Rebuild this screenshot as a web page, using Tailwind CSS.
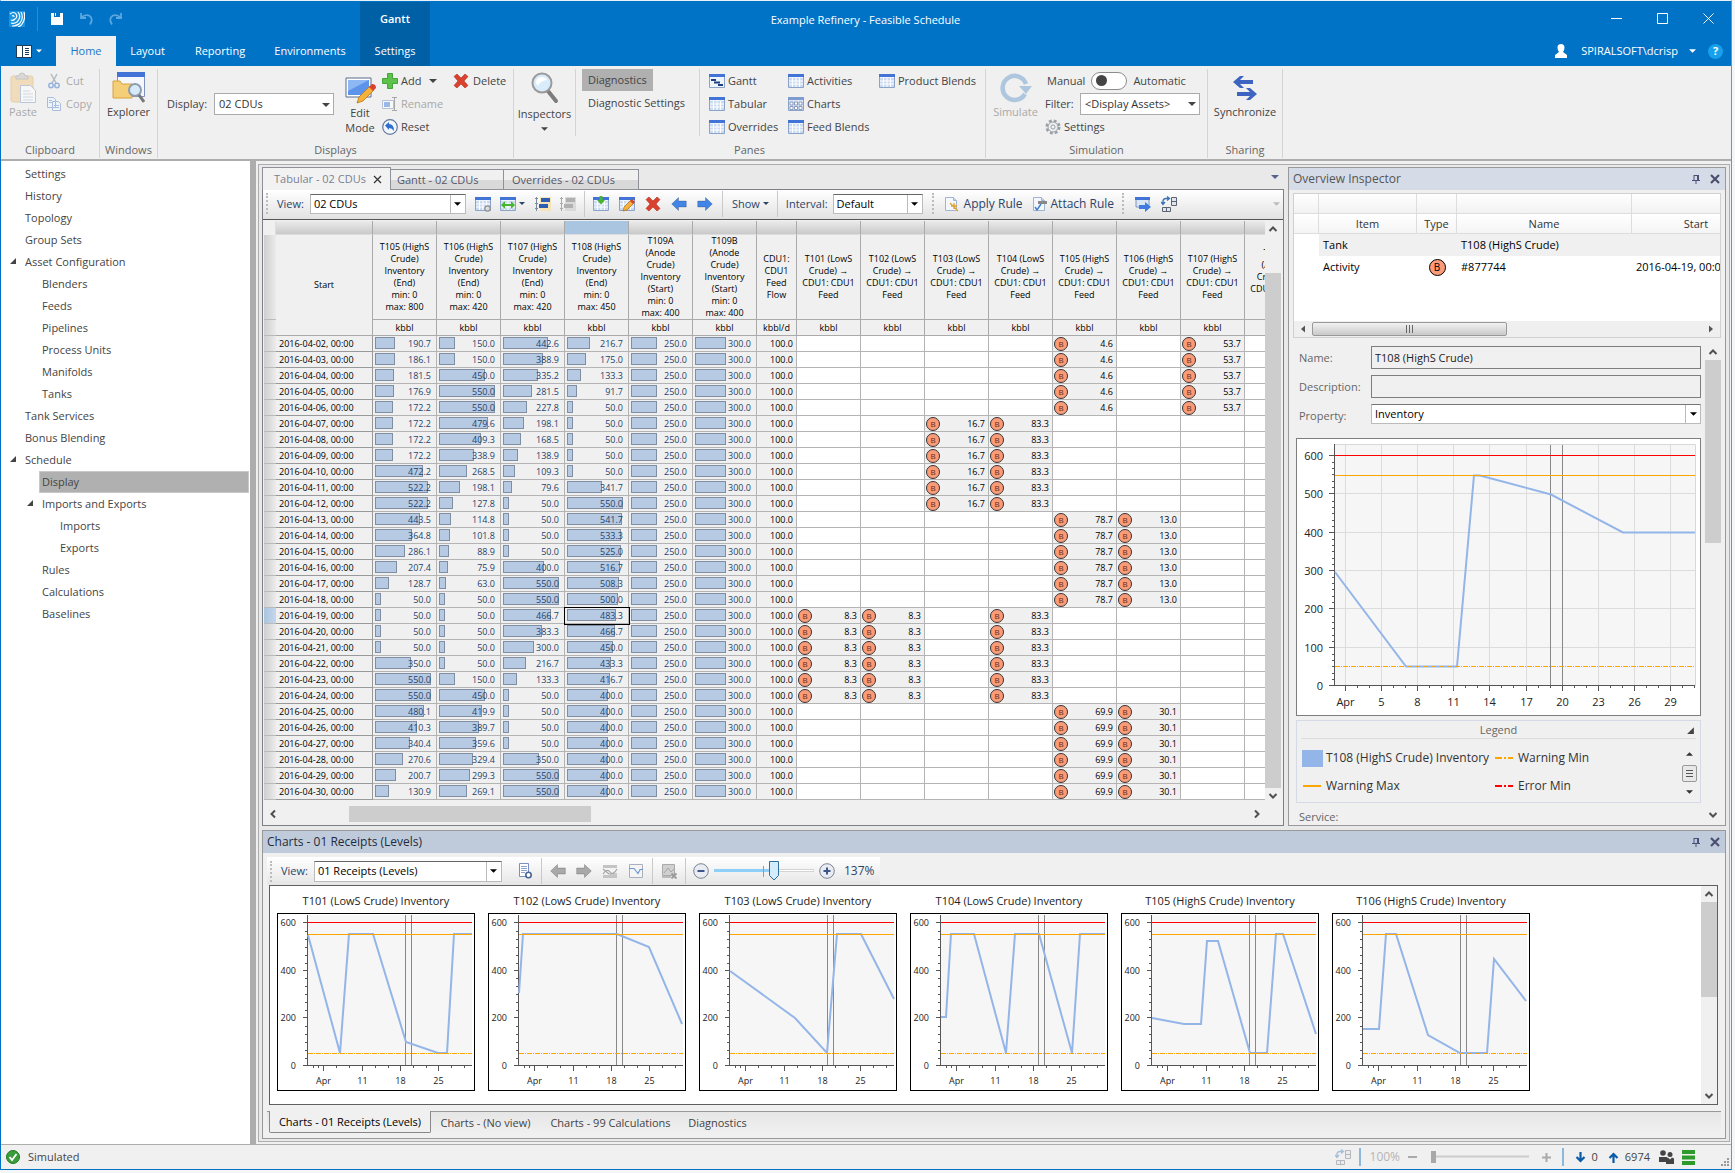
<!DOCTYPE html>
<html lang="en">

<head>
    <meta charset="UTF-8">
    <meta name="viewport" content="width=device-width, initial-scale=1.0">
    <title>Example Refinery - Feasible Schedule</title>
    <script src="https://cdn.jsdelivr.net/npm/@tailwindcss/browser@4"></script>
</head>

<body class="h-screen overflow-hidden bg-[#f4f6f8] font-['Segoe_UI','Open_Sans',sans-serif] text-[11px] leading-4 text-[#444]">

    <!-- shared icons -->
    <svg class="hidden">
        <symbol id="caret" viewBox="0 0 8 4"><path d="M0 0h8L4 4z" fill="currentColor" /></symbol>
        <symbol id="chev-up" viewBox="0 0 16 16"><path d="M4.500 10 8 6.500 11.500 10" fill="none" stroke="#505050" stroke-width="2" /></symbol>
        <symbol id="chev-down" viewBox="0 0 16 16"><path d="M4.500 6 8 9.500 11.500 6" fill="none" stroke="#505050" stroke-width="2" /></symbol>
        <symbol id="chev-left" viewBox="0 0 16 16"><path d="M10 4.500 6.500 8 10 11.500" fill="none" stroke="#505050" stroke-width="2" /></symbol>
        <symbol id="chev-right" viewBox="0 0 16 16"><path d="M6 4.500 9.500 8 6 11.500" fill="none" stroke="#505050" stroke-width="2" /></symbol>
        <symbol id="tri" viewBox="0 0 8 8"><path d="M7 1v6H1z" fill="#444" /></symbol>
        <symbol id="grid" viewBox="0 0 16 16">
            <path d="M.5 1.500h15v13H.5z" fill="#eef4fc" stroke="#8ba3c9" />
            <path d="M1 5h14v9H1z" fill="#c9daf1" />
            <path d="M1 8h14M1 11h14M4.500 5v9M8 5v9M11.500 5v9" stroke="#fff" />
            <path d="M0 1h16v3H0z" fill="#4274d8" />
        </symbol>
        <symbol id="left" viewBox="0 0 16 16"><path d="M.7 8 7.500 1.500V5h7.800v6H7.500v3.500z" fill="currentColor" stroke="#0003" /></symbol>
        <symbol id="right" viewBox="0 0 16 16"><path d="M15.300 8 8.500 1.500V5H.7v6h7.800v3.500z" fill="currentColor" stroke="#0003" /></symbol>
        <symbol id="cross" viewBox="0 0 16 16"><path d="M1 3.500 4 1l4 4 4-4 3 2.500L11 8l4 4.500L12 15l-4-4-4 4-3-2.500L5 8z" fill="#d9422e" stroke="#b13221" stroke-width=".6" /></symbol>
        <symbol id="pin" viewBox="0 0 10 10"><path d="M3 1v5M7.500 1v5M3 1.500h4M6.500 1v5M1 6.500h8M5 7v3" fill="none" stroke="#4a5078" /></symbol>
        <symbol id="close" viewBox="0 0 10 10"><path d="m1 1 8 8M9 1 1 9" stroke="#4a4f70" stroke-width="2.200" /></symbol>
        <symbol id="swap" viewBox="0 0 16 16">
            <path d="M2 8V5q0-2.500 3-2.500h3M6 .5l2.500 2L6 4.500M0 6l2 2.500L4 6" fill="none" stroke="#3b74b9" stroke-width="1.300" />
            <path d="M10.500 1.500h5v8h-5zM10.500 5.500h5M1.500 11.500h8v4h-8zM5.500 11.500v4" fill="#dfe5ec" stroke="#5b6470" />
        </symbol>
        <symbol id="page" viewBox="0 0 16 16">
            <path d="M2.500 1.500h8l3 3v10h-11z" fill="#f4f8fe" stroke="#9fb4d3" />
            <path d="M10.500 1.500v3h3" fill="#c8d9f0" stroke="#9fb4d3" />
        </symbol>
    </svg>

    <div class="mr-[3px] flex h-[calc(100%-3px)] flex-col border-t border-r border-b border-l border-t-[#e8f1f8] border-r-[#4f9fdb] border-b-[#0072c6] border-l-[#0072c6] bg-[#f0f0f0]">

        <!-- title bar -->
        <header class="flex h-[65px] shrink-0 bg-[#0173c7] text-white">
            <div class="flex w-[359px] flex-col">
                <div class="flex h-[35px] items-center pl-2">
                    <svg class="size-4" viewBox="0 0 16 16">
                        <path d="M0 0h16v16H0z" fill="#1a93e0" />
                        <path d="M1 3q4-3 6 0t-1 5q-2 2-4 1M3 5q2-1 2 1M9 1q4 5-1 10-3 2-6 1M12 1q3 6-1 11-3 3-8 3M15 1q2 7-2 12-1 2-4 3" fill="none" stroke="#fff" stroke-width="1.200" />
                    </svg>
                    <span class="ml-3 h-6 w-px bg-[#2f8cd2]"></span>
                    <button class="ml-3" aria-label="Save">
                        <svg class="size-[14px]" viewBox="0 0 14 14"><path d="M1 1h3v4h6V1h3v12H1zM5 1h1v3H5z" fill="#fff" /></svg>
                    </button>
                    <button class="ml-4" aria-label="Undo">
                        <svg class="size-[14px]" viewBox="0 0 14 14" fill="none" stroke="#5ba6df" stroke-width="1.800"><path d="M1 1v5h5M1.500 5.500Q5 2 9 3.500q5 3 1 9" /></svg>
                    </button>
                    <button class="ml-[14px]" aria-label="Redo">
                        <svg class="size-[14px]" viewBox="0 0 14 14" fill="none" stroke="#5ba6df" stroke-width="1.800"><path d="M13 1v5H8M12.500 5.500Q9 2 5 3.500q-5 3-1 9" /></svg>
                    </button>
                </div>
                <nav class="flex h-[30px]">
                    <button class="flex w-[55px] items-center gap-1 pl-[15px]" aria-label="File">
                        <svg class="h-[13px] w-4" viewBox="0 0 16 13">
                            <path d="M0 0h16v13H0z" fill="#1d3c57" />
                            <path d="M1 1h5v11H1zM7 1h8v11H7z" fill="#fff" />
                            <path d="M9 3.500h4M9 5.500h4M9 7.500h4M9 9.500h4" stroke="#1d3c57" />
                        </svg>
                        <svg class="h-1 w-[6px]"><use href="#caret" /></svg>
                    </button>
                    <button class="w-[60px] bg-[#f0f0f0] text-[#1976c8]">Home</button>
                    <button class="w-[63px]">Layout</button>
                    <button class="w-[82px]">Reporting</button>
                    <button class="w-[98px]">Environments</button>
                </nav>
            </div>
            <div class="mt-px flex w-[70px] flex-col bg-[#0060a6]">
                <span class="flex h-[34px] items-center justify-center font-semibold">Gantt</span>
                <button class="h-[30px]">Settings</button>
            </div>
            <h1 class="flex h-[37px] flex-1 items-center justify-center">Example Refinery - Feasible Schedule</h1>
            <div class="flex w-[430px] flex-col pr-2">
                <div class="flex h-[35px] items-center justify-end gap-[35px] pr-[9px]">
                    <button aria-label="Minimize"><svg class="size-[11px]"><path d="M0 5.500h11" stroke="#fff" /></svg></button>
                    <button aria-label="Maximize"><svg class="size-[11px]"><path d="M.5.5h10v10H.5z" fill="none" stroke="#fff" /></svg></button>
                    <button aria-label="Close"><svg class="size-[11px]"><path d="m.5.5 10 10m0-10-10 10" stroke="#fff" /></svg></button>
                </div>
                <div class="flex h-[30px] items-center justify-end">
                    <svg class="mr-[14px] h-[14px] w-3" viewBox="0 0 12 14"><path d="M6 0a3.500 3.500 0 0 1 3.500 3.500Q9.500 6 8 8l4 3v3H0v-3l4-3Q2.500 6 2.500 3.500A3.500 3.500 0 0 1 6 0z" fill="#fff" /></svg>
                    <button class="flex items-center gap-[11px]">SPIRALSOFT\dcrisp <svg class="h-1 w-[7px]"><use href="#caret" /></svg></button>
                    <button class="ml-[12px] flex size-[15px] items-center justify-center rounded-full bg-[#17a0ec] text-[11px] font-bold">?</button>
                </div>
            </div>
        </header>

        <!-- ribbon -->
        <section class="flex h-[95px] shrink-0 border-b-2 border-[#adadad] pt-[3px] pb-px">
            <div class="flex w-[99px] flex-col border-r border-[#d4d4d4]">
                <div class="flex flex-1 pl-[8px] text-[#a9a9a9]">
                    <button class="flex w-7 flex-col items-center">
                        <svg class="mt-[3px] h-8 w-7 shrink-0 opacity-50" viewBox="0 0 28 32">
                            <rect x="2" y="4" width="22" height="26" rx="2" fill="#f0c987" stroke="#dbb06a" />
                            <path d="M7 7V4h3q0-3 3-3t3 3h3v3z" fill="#c4c4c4" stroke="#999" />
                            <path d="M11.500 13.500h10l5 5v12h-15z" fill="#fff" stroke="#8aa0c0" />
                            <path d="M14 19h7m-7 3h10m-10 3h10m-10 3h10" stroke="#b4c2d8" />
                        </svg>
                        Paste
                    </button>
                    <div class="flex flex-col pl-[9px]">
                        <button class="flex h-[23px] items-center gap-1">
                            <svg class="size-4 opacity-60" viewBox="0 0 16 16" fill="none"><path d="m5 1 5 9M11 1l-5 9" stroke="#8a96a8" stroke-width="1.500" /><circle cx="5" cy="12.500" r="2.200" stroke="#5c8ad0" stroke-width="1.500" /><circle cx="11" cy="12.500" r="2.200" stroke="#5c8ad0" stroke-width="1.500" /></svg>
                            Cut
                        </button>
                        <button class="flex h-[23px] items-center gap-1">
                            <svg class="size-4 opacity-60" viewBox="0 0 16 16" fill="#eef4ff" stroke="#7b9ccf"><path d="M1.500 1.500h6l2 2v8h-8zM6.500 5.500h6l2 2v7h-8z" /><path d="M8 9.500h5M8 11.500h5M3 4.500h3M3 6.500h3" /></svg>
                            Copy
                        </button>
                    </div>
                </div>
                <span class="text-center text-[#666]">Clipboard</span>
            </div>
            <div class="flex w-[58px] flex-col border-r border-[#d4d4d4]">
                <button class="flex flex-1 flex-col items-center">
                    <svg class="mt-[3px] h-8 w-[33px]" viewBox="0 0 33 32">
                        <path d="M5.500.5h27v24h-27z" fill="#f4f8fe" stroke="#7c94bd" />
                        <path d="M5 0h28v5H5z" fill="#4274d8" />
                        <path d="M1 9h7l2 3h10v14H1z" fill="#f5cf78" stroke="#d8a23c" />
                        <circle cx="23" cy="18" r="6" fill="#d6eafa" stroke="#8e9bab" stroke-width="2" />
                        <path d="m27 23 5 7" stroke="#777" stroke-width="3" />
                    </svg>
                    Explorer
                </button>
                <span class="text-center text-[#666]">Windows</span>
            </div>
            <div class="flex w-[356px] flex-col border-r border-[#d4d4d4]">
                <div class="flex flex-1">
                    <div class="flex h-[69px] items-center pl-[9px]">
                        <label for="display">Display:</label>
                        <div class="relative ml-[7px]">
                            <select id="display" class="block h-[22px] w-[120px] appearance-none border border-[#ababab] bg-white pl-1 text-[#333]"><option>02 CDUs</option></select>
                            <svg class="pointer-events-none absolute top-[10px] right-1 h-1 w-2"><use href="#caret" /></svg>
                        </div>
                    </div>
                    <button class="ml-[8px] flex w-[36px] flex-col items-center leading-[15px]">
                        <svg class="mt-2 mb-px h-[27px] w-[31px] shrink-0" viewBox="0 0 31 27">
                            <path d="M1 1h25v19H1z" fill="#fff" stroke="#5a6b8c" />
                            <path d="M3 3h21v15H3z" fill="#5b94e8" />
                            <path d="M3 3h21L3 14z" fill="#8db8f4" />
                            <path d="m12 26 2-6L25 9l4 4-11 11z" fill="#f4b13c" stroke="#b87912" stroke-width=".8" />
                            <path d="m24 10 3-3q4 0 4 4l-3 3z" fill="#d9422e" />
                        </svg>
                        Edit Mode
                    </button>
                    <div class="ml-1 flex w-[71px] flex-col">
                        <button class="flex h-[23px] items-center gap-[3px]">
                            <svg class="size-4" viewBox="0 0 16 16"><path d="M5.500.5h5v5h5v5h-5v5h-5v-5h-5v-5h5z" fill="#5cc24b" stroke="#46a538" /></svg>
                            Add <svg class="ml-[5px] h-1 w-2"><use href="#caret" /></svg>
                        </button>
                        <button class="flex h-[23px] items-center gap-[3px] text-[#a9a9a9]">
                            <svg class="size-4 opacity-60" viewBox="0 0 16 16"><path d="M.5 4.500h11v8H.5z" fill="#fff" stroke="#8fa5c4" /><path d="M2 6h6v5H2z" fill="#5b94e8" /><path d="M10 1.500h5M10 14.500h5M12.500 2v12" stroke="#777" /></svg>
                            Rename
                        </button>
                        <button class="flex h-[23px] items-center gap-[3px]">
                            <svg class="size-4" viewBox="0 0 16 16"><circle cx="8" cy="8" r="7.300" fill="#f2f7fd" stroke="#63779a" stroke-width="1.200" /><path d="M3 6.500 7 3v2q5 0 5 7-2-3-5-3v2z" fill="#2f6fd0" /></svg>
                            Reset
                        </button>
                    </div>
                    <button class="flex h-[23px] items-center gap-1"><svg class="size-4"><use href="#cross" /></svg>Delete</button>
                </div>
                <span class="text-center text-[#666]">Displays</span>
            </div>
            <div class="flex w-[472px] flex-col border-r border-[#d4d4d4]">
                <div class="flex flex-1">
                    <button class="flex h-[67px] w-[62px] flex-col items-center border-r border-[#d4d4d4]">
                        <svg class="mt-[3px] mb-[2px] h-8 w-7 shrink-0" viewBox="0 0 28 32">
                            <path d="m17 19 8 10" stroke="#7c7c7c" stroke-width="4" stroke-linecap="round" />
                            <circle cx="11" cy="11" r="9.500" fill="#d9ecfb" stroke="#9a9a9a" stroke-width="2" />
                            <path d="M5 11q0-6 6-6 4 0 5 3-7 1-9 6z" fill="#fff" />
                        </svg>
                        Inspectors
                        <svg class="mt-[5px] h-1 w-[7px]"><use href="#caret" /></svg>
                    </button>
                    <div class="flex h-[67px] w-[124px] flex-col items-start border-r border-[#d4d4d4] pl-[6px]">
                        <button class="h-[22px] bg-[#b0b0b0] px-[6px]">Diagnostics</button>
                        <button class="h-[24px] px-[6px]">Diagnostic Settings</button>
                    </div>
                    <div class="grid h-[69px] grid-flow-col grid-cols-[79px_91px_auto] grid-rows-3 pl-[9px]">
                        <button class="flex items-center gap-[3px]">
                            <svg class="size-4" viewBox="0 0 16 16"><path d="M.5 1.500h15v13H.5z" fill="#eef4fc" stroke="#8ba3c9" /><path d="M0 1h16v3H0z" fill="#4274d8" /><path d="M2 7h5M5 9.500h6M9 12h5" stroke="#1f3f80" stroke-width="2" /></svg>
                            Gantt
                        </button>
                        <button class="flex items-center gap-[3px]"><svg class="size-4"><use href="#grid" /></svg>Tabular</button>
                        <button class="flex items-center gap-[3px]"><svg class="size-4"><use href="#grid" /></svg>Overrides</button>
                        <button class="flex items-center gap-[3px]"><svg class="size-4"><use href="#grid" /></svg>Activities</button>
                        <button class="flex items-center gap-[3px]">
                            <svg class="size-4" viewBox="0 0 16 16"><path d="M.5 1.500h15v13H.5z" fill="#dce6f5" stroke="#8ba3c9" /><path d="M0 1h16v3H0z" fill="#7e9bd0" /><path d="M2 6h3v3H2zM6.500 6h3v3h-3zM11 6h3v3h-3zM2 10.500h3v3H2zM6.500 10.500h3v3h-3zM11 10.500h3v3h-3z" fill="#fff" stroke="#7287b0" stroke-width=".8" /></svg>
                            Charts
                        </button>
                        <button class="flex items-center gap-[3px]"><svg class="size-4"><use href="#grid" /></svg>Feed Blends</button>
                        <button class="flex items-center gap-[3px]"><svg class="size-4"><use href="#grid" /></svg>Product Blends</button>
                    </div>
                </div>
                <span class="text-center text-[#666]">Panes</span>
            </div>
            <div class="flex w-[222px] flex-col border-r border-[#d4d4d4]">
                <div class="flex flex-1">
                    <button class="flex w-[59px] flex-col items-center text-[#a9a9a9]">
                        <svg class="mt-[3px] h-8 w-[32px]" viewBox="0 0 32 32">
                            <path d="M25 22A12 12 0 1 1 26 12" fill="none" stroke="#aec7de" stroke-width="4.500" />
                            <path d="M19 14h13l-6 8z" fill="#aec7de" />
                        </svg>
                        Simulate
                    </button>
                    <div class="flex flex-col">
                        <label class="flex h-[23px] items-center pl-[2px]">Manual
                            <input type="checkbox" role="switch" class="peer sr-only">
                            <span class="mx-[6px] flex h-[18px] w-9 items-center rounded-full border border-[#8d8d8d] bg-white pl-[4px]"><span class="size-[11px] rounded-full bg-[#444]"></span></span>
                            Automatic
                        </label>
                        <div class="flex h-[23px] items-center">
                            <label for="filter" class="w-[35px]">Filter:</label>
                            <div class="relative">
                                <select id="filter" class="block h-[22px] w-[120px] appearance-none border border-[#ababab] bg-white pl-1 text-[#333]"><option>&lt;Display Assets&gt;</option></select>
                                <svg class="pointer-events-none absolute top-[9px] right-1 h-1 w-2"><use href="#caret" /></svg>
                            </div>
                        </div>
                        <button class="flex h-[23px] items-center gap-[3px]">
                            <svg class="size-4" viewBox="0 0 16 16"><circle cx="8" cy="8" r="6.300" fill="none" stroke="#9aa0a6" stroke-width="2.500" stroke-dasharray="2.900 2.050" /><circle cx="8" cy="8" r="5" fill="#eceff2" stroke="#9aa0a6" /><circle cx="8" cy="8" r="2" fill="#f7f7f7" stroke="#9aa0a6" /></svg>
                            Settings
                        </button>
                    </div>
                </div>
                <span class="text-center text-[#666]">Simulation</span>
            </div>
            <div class="flex w-[75px] flex-col border-r border-[#d4d4d4]">
                <button class="flex flex-1 flex-col items-center">
                    <svg class="mt-[7px] mb-1 h-6 w-6" viewBox="0 0 24 24" fill="#3d64c0"><path d="m0 6 7-6h4L7 4h13v4H7l4 4H7zM24 18l-7 6h-4l4-4H4v-4h13l-4-4h4z" /></svg>
                    Synchronize
                </button>
                <span class="text-center text-[#666]">Sharing</span>
            </div>
        </section>

        <main class="flex min-h-0 flex-1">
            <!-- explorer tree -->
            <aside class="w-[249px] shrink-0 bg-white pt-[2px] pl-px">
                <ul id="tree"></ul>
            </aside>
            <div class="w-[6px] shrink-0 bg-[#adadad]"></div>

            <div class="mt-[3px] mr-px mb-[2px] ml-[2px] flex min-w-0 flex-1 flex-col gap-1 border border-[#adadad] bg-[#e9e9e9] pt-[2px] pr-[3px] pb-[2px] pl-[3px]">
                <div class="flex min-h-0 flex-1 gap-1">
                    <!-- tabular pane -->
                    <section class="flex min-w-0 flex-1 flex-col">
                        <div class="relative z-10 -mb-px flex h-[23px] shrink-0 items-end">
                            <button class="flex h-[23px] w-[129px] items-center justify-between border border-b-0 border-[#8f9199] bg-[#f2f2f2] pr-2 pl-[11px] text-[#7b7f92]">Tabular - 02 CDUs
                                <svg class="size-[9px]" viewBox="0 0 9 9"><path d="m1 1 7 7m0-7L1 8" stroke="#333" stroke-width="1.200" /></svg>
                            </button>
                            <button class="h-[21px] w-[113px] border border-l-0 border-[#8f9199] bg-linear-to-b from-[#f0f0f0] from-50% to-[#d9d9d9] to-50% pl-[6px] text-left text-[#54576a]">Gantt - 02 CDUs</button>
                            <button class="h-[21px] w-[135px] border border-l-0 border-[#8f9199] bg-linear-to-b from-[#f0f0f0] from-50% to-[#d9d9d9] to-50% pl-[8px] text-left text-[#54576a]">Overrides - 02 CDUs</button>
                            <button class="mr-[5px] mb-[11px] ml-auto text-[#5a6290]" aria-label="Tab list"><svg class="h-1 w-2"><use href="#caret" /></svg></button>
                        </div>
                        <div class="flex min-h-0 flex-1 flex-col border border-[#7d7f86] bg-[#f0f0f0] pb-[3px]">
                            <div class="flex h-[30px] shrink-0 items-center border-b border-[#555] bg-linear-to-b from-white to-[#e2e2e2] pb-[2px] pl-[3px] text-[#2d4468]">
                                <span class="mr-[9px] h-[21px] border-l-2 border-dotted border-[#bbb]"></span>
                                <label for="view">View:</label>
                                <div class="relative ml-[6px]">
                                    <select id="view" class="block h-5 w-[156px] appearance-none border border-[#bbb] border-t-[#666] bg-white pl-[3px] text-black"><option>02 CDUs</option></select>
                                    <span class="pointer-events-none absolute top-px right-px flex h-[18px] w-[15px] items-center justify-center border-l border-[#bbb] text-black"><svg class="h-1 w-[7px]"><use href="#caret" /></svg></span>
                                </div>
                                <div class="ml-[9px] flex items-center gap-[9px]">
                                    <button aria-label="View settings"><svg class="size-4" viewBox="0 0 16 16"><use href="#grid" /><circle cx="12.500" cy="12.500" r="2.700" fill="#ddd" stroke="#8a8f96" stroke-width="1.200" /></svg></button>
                                    <button class="flex items-center gap-[3px]" aria-label="Column width"><svg class="size-4" viewBox="0 0 16 16"><use href="#grid" /><path d="m1 9 4-4v3h6V5l4 4-4 4v-3H5v3z" fill="#47b52d" /></svg><svg class="h-[3px] w-[6px]"><use href="#caret" /></svg></button>
                                    <button aria-label="Rows"><svg class="ml-px size-4" viewBox="0 0 16 16"><path d="M5 1h11v14H5z" fill="#f6e3b8" /><path d="M6 2h9v4H6zM4 8h9v4H4z" fill="#2d5fb0" /><path d="M1.500 1v14M0 2.500h3M0 7.500h3M0 12.500h3" stroke="#7d8a9c" /></svg></button>
                                    <button aria-label="Rows off"><svg class="size-4" viewBox="0 0 16 16"><path d="M5 1h11v14H5z" fill="#d9d9d9" /><path d="M6 2h9v4H6zM4 8h9v4H4z" fill="#b0b0b0" /><path d="M1.500 1v14M0 2.500h3M0 7.500h3M0 12.500h3" stroke="#aaa" /></svg></button>
                                </div>
                                <span class="mx-[8px] h-[26px] w-px bg-[#c9c9c9]"></span>
                                <div class="flex items-center gap-[10px]">
                                    <button aria-label="Insert"><svg class="size-4" viewBox="0 0 16 16"><use href="#grid" /><path d="M6.500 0h3v4H12L8 8.500 4 4h2.500z" fill="#47b52d" /></svg></button>
                                    <button aria-label="Edit"><svg class="size-4" viewBox="0 0 16 16"><use href="#grid" /><path d="m4 15 1-4 7-7 3 3-7 7z" fill="#f4b13c" stroke="#a86d10" stroke-width=".7" /><path d="m11 5 2-2 3 3-2 2z" fill="#d9422e" /></svg></button>
                                    <button aria-label="Remove"><svg class="size-4"><use href="#cross" /></svg></button>
                                    <button class="text-[#4285e8]" aria-label="Previous"><svg class="size-4"><use href="#left" /></svg></button>
                                    <button class="text-[#4285e8]" aria-label="Next"><svg class="size-4"><use href="#right" /></svg></button>
                                </div>
                                <span class="mx-[9px] h-[26px] w-px bg-[#c9c9c9]"></span>
                                <button class="flex items-center gap-[3px]">Show <svg class="h-[3px] w-[6px]"><use href="#caret" /></svg></button>
                                <span class="mx-[8px] h-[26px] w-px bg-[#c9c9c9]"></span>
                                <label for="interval">Interval:</label>
                                <div class="relative ml-[5px]">
                                    <select id="interval" class="block h-5 w-[90px] appearance-none border border-[#bbb] border-t-[#666] bg-white pl-[3px] text-black"><option>Default</option></select>
                                    <span class="pointer-events-none absolute top-px right-px flex h-[18px] w-[15px] items-center justify-center border-l border-[#bbb] text-black"><svg class="h-1 w-[7px]"><use href="#caret" /></svg></span>
                                </div>
                                <span class="mr-[9px] ml-[9px] h-[21px] border-l-2 border-dotted border-[#bbb]"></span>
                                <button class="flex items-center gap-[5px] text-[12px]"><svg class="size-4" viewBox="0 0 16 16"><use href="#page" /><path d="m7 7 8 8M11 7v6M8 10h6" stroke="#e0a030" stroke-width="1.300" /></svg>Apply Rule</button>
                                <button class="ml-[8px] flex items-center gap-[4px] text-[12px]"><svg class="size-4" viewBox="0 0 16 16"><use href="#page" /><path d="m4 11 2 3 4-6" fill="none" stroke="#3f7fd0" stroke-width="1.500" /><path d="M7 5h9v3H7z" fill="#888" /></svg>Attach Rule</button>
                                <span class="mr-[11px] ml-[8px] h-[21px] border-l-2 border-dotted border-[#bbb]"></span>
                                <button aria-label="Send"><svg class="size-4" viewBox="0 0 16 16"><path d="M1 2h13v9H1z" fill="#dbe7f7" stroke="#7c94bd" /><path d="M0 1h15v3H0z" fill="#4274d8" /><path d="M4 9h6V6l6 5-6 5v-3H4z" fill="#3f7be0" /></svg></button>
                                <button class="ml-[10px]" aria-label="Swap"><svg class="size-4"><use href="#swap" /></svg></button>
                                <svg class="mr-[3px] ml-auto h-1 w-[7px] text-[#bbb]"><use href="#caret" /></svg>
                            </div>
                            <div class="flex min-h-0 flex-1 pt-px pr-[2px] pl-px">
                                <div class="min-w-0 flex-1 overflow-hidden">
                                    <table class="w-[1045px] table-fixed border-separate border-spacing-0 text-[9px] leading-3 text-black">
                                        <colgroup id="cols"></colgroup>
                                        <thead id="head"></thead>
                                        <tbody id="rows"></tbody>
                                    </table>
                                </div>
                                <div class="mb-[2px] flex w-4 shrink-0 flex-col">
                                    <svg class="size-4 shrink-0"><use href="#chev-up" /></svg>
                                    <div class="mt-[36px] flex-1 bg-[#cdcdcd]"></div>
                                    <svg class="size-4 shrink-0"><use href="#chev-down" /></svg>
                                </div>
                            </div>
                            <div class="mr-[18px] flex h-4 shrink-0">
                                <svg class="ml-[2px] size-4 shrink-0"><use href="#chev-left" /></svg>
                                <div class="flex-1"><div class="ml-[7%] h-4 w-1/4 bg-[#cdcdcd]"></div></div>
                                <svg class="size-4 shrink-0"><use href="#chev-right" /></svg>
                            </div>
                        </div>
                    </section>

                    <!-- overview inspector -->
                    <section class="flex w-[438px] shrink-0 flex-col border border-[#999] bg-[#f0f0f0]">
                        <div class="flex h-[22px] shrink-0 items-center bg-[#d6dce7] px-1 text-[12px] text-[#555]">
                            <h2 class="flex-1">Overview Inspector</h2>
                            <button class="mr-[9px]" aria-label="Pin"><svg class="size-[10px]"><use href="#pin" /></svg></button>
                            <button class="mr-px" aria-label="Close"><svg class="size-[10px]"><use href="#close" /></svg></button>
                        </div>
                        <div class="mx-1 mt-[3px] overflow-hidden border border-[#d0d0d0] bg-white">
                            <table class="w-full table-fixed border-separate border-spacing-0 text-black">
                                <colgroup><col class="w-[25px]"><col class="w-[98px]"><col class="w-10"><col class="w-[175px]"><col></colgroup>
                                <thead>
                                    <tr class="h-5 bg-linear-to-b from-white to-[#f1f1f1]"><td class="border-r border-b border-[#ddd]"></td><td class="border-r border-b border-[#ddd]"></td><td class="border-r border-b border-[#ddd]"></td><td class="border-r border-b border-[#ddd]"></td><td class="border-b border-[#ddd]"></td></tr>
                                    <tr class="h-5 bg-linear-to-b from-white to-[#f4f4f4] text-[#333]">
                                        <th class="border-r border-b border-[#ddd]"></th>
                                        <th class="border-r border-b border-[#ddd] font-normal">Item</th>
                                        <th class="border-r border-b border-[#ddd] font-normal">Type</th>
                                        <th class="border-r border-b border-[#ddd] font-normal">Name</th>
                                        <th class="border-b border-[#ddd] pl-10 font-normal">Start</th>
                                    </tr>
                                </thead>
                                <tbody>
                                    <tr class="h-[22px]"><td></td><td class="bg-[#f0f0f0] pl-1">Tank</td><td class="bg-[#f0f0f0]"></td><td class="bg-[#f0f0f0] pl-1">T108 (HighS Crude)</td><td class="bg-[#f0f0f0]"></td></tr>
                                    <tr class="h-[22px]"><td></td><td class="pl-1">Activity</td><td><span class="mx-auto flex size-[17px] items-center justify-center rounded-full border border-black bg-[#fc9b78] text-[10px]">B</span></td><td class="pl-1">#877744</td><td class="overflow-hidden pl-1 whitespace-nowrap">2016-04-19, 00:00</td></tr>
                                </tbody>
                            </table>
                            <div class="mt-[43px] flex h-4 items-center bg-[#efefef]">
                                <svg class="ml-1 size-[10px]" viewBox="0 0 10 10"><path d="M7 1.500v7L3 5z" fill="#555" /></svg>
                                <div class="flex-1 px-1"><div class="flex h-[14px] w-1/2 items-center justify-center gap-[2px] rounded-xs border border-[#999] bg-linear-to-b from-[#f2f2f2] to-[#c9c9c9]"><i class="h-2 w-px bg-[#666]"></i><i class="h-2 w-px bg-[#666]"></i><i class="h-2 w-px bg-[#666]"></i></div></div>
                                <svg class="mr-1 size-[10px]" viewBox="0 0 10 10"><path d="M3 1.500v7L7 5z" fill="#555" /></svg>
                            </div>
                        </div>
                        <div class="mx-1 mt-[6px] mb-[2px] flex min-h-0 flex-1">
                            <div class="min-w-0 flex-1 overflow-hidden pt-[2px] pr-[4px] pl-[3px]">
                                <form class="grid grid-cols-[75px_1fr] items-center gap-y-[6px]">
                                    <label for="name" class="pl-[3px] text-[#666]">Name:</label>
                                    <input id="name" readonly value="T108 (HighS Crude)" class="h-[23px] min-w-0 border border-[#7e7e7e] bg-[#f0f0f0] px-[3px] text-[#222]">
                                    <label for="desc" class="pl-[3px] text-[#666]">Description:</label>
                                    <input id="desc" readonly class="h-[23px] min-w-0 border border-[#7e7e7e] bg-[#f0f0f0] px-[3px]">
                                    <label for="prop" class="pl-[3px] text-[#666]">Property:</label>
                                    <div class="relative h-[23px]">
                                        <select id="prop" class="block h-5 w-full appearance-none border border-[#bbb] border-t-[#777] bg-white pl-[3px] text-black"><option>Inventory</option></select>
                                        <span class="pointer-events-none absolute top-px right-px flex h-[18px] w-[15px] items-center justify-center border-l border-[#bbb] text-black"><svg class="h-1 w-[7px]"><use href="#caret" /></svg></span>
                                    </div>
                                </form>
                                <div id="overview" class="mt-[11px] border border-[#7e7e7e] bg-white"></div>
                                <div class="mt-1 h-[83px] border border-[#d5dae6]">
                                    <div class="relative mx-1 flex h-[18px] items-center justify-center border-b border-[#ddd] text-[#666]">Legend
                                        <svg class="absolute top-[5px] right-[1px] size-[9px]"><use href="#tri" /></svg>
                                    </div>
                                    <div class="flex pt-[8px] pr-[3px] pl-[5px] text-[#333]">
                                        <div class="grid flex-1 grid-cols-[193px_1fr] gap-y-[4px]">
                                            <span class="flex h-[22px] items-center gap-[3px]"><i class="h-[17px] w-[21px] shrink-0 bg-[#94b5e8]"></i><span class="text-[12px] whitespace-nowrap">T108 (HighS Crude) Inventory</span></span>
                                            <span class="flex h-[22px] items-center gap-[5px] text-[12px]"><svg class="h-[2px] w-[18px]"><path d="M0 1h18" stroke="#ffa500" stroke-width="2" stroke-dasharray="7 2 2 2" /></svg>Warning Min</span>
                                            <span class="flex h-[22px] items-center gap-[5px] text-[12px]"><i class="ml-px h-[2px] w-[18px] bg-[#ffa500]"></i>Warning Max</span>
                                            <span class="flex h-[22px] items-center gap-[5px] text-[12px]"><svg class="h-[2px] w-[18px]"><path d="M0 1h18" stroke="#f00" stroke-width="2" stroke-dasharray="7 2 2 2" /></svg>Error Min</span>
                                        </div>
                                        <div class="flex h-[52px] w-[15px] flex-col items-center justify-between py-[5px]">
                                            <svg class="h-[4px] w-[7px] rotate-180"><use href="#caret" /></svg>
                                            <div class="flex h-[17px] w-[15px] flex-col items-center justify-center gap-[2px] rounded-xs border border-[#999] bg-[#e8e8e8]"><i class="h-px w-[7px] bg-[#555]"></i><i class="h-px w-[7px] bg-[#555]"></i><i class="h-px w-[7px] bg-[#555]"></i></div>
                                            <svg class="h-[4px] w-[7px]"><use href="#caret" /></svg>
                                        </div>
                                    </div>
                                </div>
                                <div class="mt-[6px] pl-[3px] text-[#666]">Service:</div>
                            </div>
                            <div class="flex w-4 shrink-0 flex-col">
                                <svg class="size-4 shrink-0"><use href="#chev-up" /></svg>
                                <div class="flex-1"><div class="h-[41%] bg-[#cdcdcd]"></div></div>
                                <svg class="size-4 shrink-0"><use href="#chev-down" /></svg>
                            </div>
                        </div>
                    </section>
                </div>

                <!-- charts pane -->
                <section class="shrink-0 border border-[#999] bg-[#f0f0f0]">
                    <div class="flex h-[22px] items-center bg-[#bfcbda] px-1 text-[12px] text-[#1f2b40]">
                        <h2 class="flex-1">Charts - 01 Receipts (Levels)</h2>
                        <button class="mr-[9px]" aria-label="Pin"><svg class="size-[10px]"><use href="#pin" /></svg></button>
                        <button class="mr-px" aria-label="Close"><svg class="size-[10px]"><use href="#close" /></svg></button>
                    </div>
                    <div class="mt-1 ml-1 flex h-7 w-max items-center bg-linear-to-b from-white to-[#e6e6e6] pr-[6px] pl-[3px] text-[#2d4468]">
                        <span class="mr-[9px] h-[21px] border-l-2 border-dotted border-[#bbb]"></span>
                        <label for="chartview">View:</label>
                        <div class="relative ml-[6px]">
                            <select id="chartview" class="block h-[21px] w-[188px] appearance-none border border-[#bbb] border-t-[#666] bg-white pl-[3px] text-black"><option>01 Receipts (Levels)</option></select>
                            <span class="pointer-events-none absolute top-px right-px flex h-[19px] w-[15px] items-center justify-center border-l border-[#bbb] text-black"><svg class="h-1 w-[7px]"><use href="#caret" /></svg></span>
                        </div>
                        <button class="ml-[15px]" aria-label="Chart settings"><svg class="size-4" viewBox="0 0 16 16"><path d="M2.500.5h9v13h-9z" fill="#fff" stroke="#7c8fc0" /><path d="M4 3.500h6M4 5.500h6M4 7.500h6M4 9.500h4" stroke="#8ea0cc" /><circle cx="11.500" cy="12" r="2.700" fill="#fff" stroke="#4a6496" stroke-width="1.600" /></svg></button>
                        <span class="mx-[8px] h-[26px] w-px bg-[#c9c9c9]"></span>
                        <div class="flex items-center gap-[10px] text-[#a9a9a9]">
                            <button aria-label="Previous"><svg class="size-4"><use href="#left" /></svg></button>
                            <button aria-label="Next"><svg class="size-4"><use href="#right" /></svg></button>
                            <button aria-label="Combine"><svg class="size-4" viewBox="0 0 16 16" fill="none"><path d="M1 2h14v3H1zM1 12h14v3H1z" fill="#c4c4c4" /><path d="M1 11q4-6 7-2t7-3M1 6l6 5h8" stroke="#a4a4a4" stroke-width="1.200" /></svg></button>
                            <button aria-label="Cursor"><svg class="size-4" viewBox="0 0 16 16" fill="none"><path d="M1.500 1.500h13v13h-13z" fill="#f4f4f4" stroke="#aab0bb" /><path d="M1 5.500h5l4 5 2-4 3 0" stroke="#6d97d2" stroke-width="1.200" /></svg></button>
                        </div>
                        <span class="mx-[8px] h-[26px] w-px bg-[#c9c9c9]"></span>
                        <button aria-label="Delete chart"><svg class="size-4" viewBox="0 0 16 16" fill="none"><path d="M1.500 1.500h12v11h-12z" fill="#d0d0d0" stroke="#aaa" /><path d="M1 14h9" stroke="#bbb" stroke-width="2" /><path d="m3 10 4-5 3 4 3-3" stroke="#a5a5a5" /><path d="m10.500 10.500 5 5m0-5-5 5" stroke="#999" stroke-width="1.800" /></svg></button>
                        <span class="mr-[7px] ml-[8px] h-[26px] w-px bg-[#c9c9c9]"></span>
                        <button aria-label="Zoom out"><svg class="size-4" viewBox="0 0 16 16"><circle cx="8" cy="8" r="7.300" fill="#e9edf3" stroke="#7b8391" /><path d="M4.500 8h7" stroke="#3d5688" stroke-width="2" /></svg></button>
                        <div class="relative mx-[5px] h-5 w-[100px]">
                            <input type="range" min="10" max="250" value="137" aria-label="Zoom" class="absolute inset-0 w-full opacity-0">
                            <svg class="size-full" viewBox="0 0 100 20"><path d="M0 8.500h100v2H0z" fill="#fff" stroke="#bbb" stroke-width=".6" /><path d="M0 8h55v3H0z" fill="#8fd0fb" /><path d="M49.500 5v11" stroke="#999" /><path d="M55.500.5h9v14l-4.500 4.500-4.500-4.500z" fill="#d4ecfb" stroke="#2d6f9f" /></svg>
                        </div>
                        <button aria-label="Zoom in"><svg class="size-4" viewBox="0 0 16 16"><circle cx="8" cy="8" r="7.300" fill="#e9edf3" stroke="#7b8391" /><path d="M4.500 8h7M8 4.500v7" stroke="#3d5688" stroke-width="2" /></svg></button>
                        <span class="ml-[9px] text-[12px]">137%</span>
                    </div>
                    <div class="mr-[7px] ml-[6px] flex h-[220px] border border-[#5f5f5f] bg-white">
                        <div id="charts" class="flex min-w-0 flex-1 gap-[13px] overflow-hidden pt-[7px] pl-[7px]"></div>
                        <div class="flex w-4 shrink-0 flex-col bg-[#f0f0f0]">
                            <svg class="size-4 shrink-0"><use href="#chev-up" /></svg>
                            <div class="h-[95px] bg-[#cdcdcd]"></div>
                            <svg class="mt-auto size-4 shrink-0"><use href="#chev-down" /></svg>
                        </div>
                    </div>
                    <nav class="mx-[4px] mt-[6px] mb-[5px] flex h-[22px] border-t border-[#999] bg-linear-to-b from-[#e6e6e6] to-[#f0f0f0] text-[#444]">
                        <button class="-mt-px ml-[2px] h-[22px] w-[162px] rounded-b-xs border border-t-0 border-[#888] bg-[#f0f0f0] text-black">Charts - 01 Receipts (Levels)</button>
                        <button class="w-[109px]">Charts - (No view)</button>
                        <button class="w-[141px]">Charts - 99 Calculations</button>
                        <button class="w-[73px]">Diagnostics</button>
                    </nav>
                </section>
            </div>
        </main>

        <!-- status bar -->
        <footer class="flex h-[25px] shrink-0 items-center border-t border-[#adadad] pr-px pl-[5px]">
            <svg class="mr-2 size-[14px]" viewBox="0 0 14 14"><circle cx="7" cy="7" r="6.500" fill="#3a9c3a" stroke="#1f7a1f" /><path d="m3.500 7 2.500 3 4.500-6" fill="none" stroke="#fff" stroke-width="1.800" /></svg>
            <span class="flex-1">Simulated</span>
            <svg class="size-4 opacity-40"><use href="#swap" /></svg>
            <span class="mr-[9px] ml-[8px] h-[18px] w-[2px] bg-[#8cb8dc]"></span>
            <span class="w-[32px] text-[12px] text-[#b5b5b5]">100%</span>
            <button class="ml-[6px]" aria-label="Zoom out"><svg class="h-2 w-[9px]"><path d="M0 4h9" stroke="#aaa" stroke-width="2" /></svg></button>
            <div class="relative ml-[14px] h-4 w-[98px]">
                <input type="range" value="0" aria-label="Page zoom" class="absolute inset-0 w-full opacity-0">
                <svg class="size-full"><path d="M0 7.500h98" stroke="#ccc" stroke-width="2" /><path d="M0 2h5v12H0z" fill="#a8a8a8" /></svg>
            </div>
            <button class="ml-[13px]" aria-label="Zoom in"><svg class="h-[9px] w-[9px]"><path d="M0 4.500h9M4.500 0v9" stroke="#aaa" stroke-width="2" /></svg></button>
            <span class="mr-[11px] ml-[11px] h-[18px] w-[2px] bg-[#8cb8dc]"></span>
            <svg class="size-[11px]" viewBox="0 0 11 11"><path d="M5.500 0v9M1.500 5l4 4 4-4" fill="none" stroke="#0a5ba8" stroke-width="2.200" /></svg>
            <span class="ml-[6px]">0</span>
            <svg class="ml-[10px] size-[11px]" viewBox="0 0 11 11"><path d="M5.500 11V2M1.500 6l4-4 4 4" fill="none" stroke="#0a5ba8" stroke-width="2.200" /></svg>
            <span class="ml-[6px]">6974</span>
            <svg class="ml-[9px] h-[14px] w-[15px]" viewBox="0 0 15 14" fill="#444"><circle cx="4" cy="3" r="2.800" /><circle cx="11" cy="4.500" r="2.500" /><path d="M0 7h8v5H0zM7 8.500l2-1 2 2 2-2 2 1V14H7z" /></svg>
            <svg class="mr-[26px] ml-[8px] h-[15px] w-[13px]" viewBox="0 0 13 15" fill="#2c9b2c"><path d="M0 0h13v4H0zM0 5.500h13v4H0zM0 11h13v4H0z" /></svg>
            <svg class="mt-[11px] size-[9px]" fill="#999"><path d="M6 0h2v2H6zM3 3h2v2H3zM6 3h2v2H6zM0 6h2v2H0zM3 6h2v2H3zM6 6h2v2H6z" /></svg>
        </footer>
    </div>

    <script>
        // explorer tree: [label, level, expanded]
        const tree = [
            ["Settings", 0], ["History", 0], ["Topology", 0], ["Group Sets", 0], ["Asset Configuration", 0, true],
            ["Blenders", 1], ["Feeds", 1], ["Pipelines", 1], ["Process Units", 1], ["Manifolds", 1], ["Tanks", 1],
            ["Tank Services", 0], ["Bonus Blending", 0], ["Schedule", 0, true], ["Display", 1],
            ["Imports and Exports", 1, true], ["Imports", 2], ["Exports", 2], ["Rules", 1], ["Calculations", 1], ["Baselines", 1]
        ];
        const indent = ["pl-[7px]", "pl-[24px]", "pl-[42px]"];
        document.getElementById("tree").innerHTML = tree.map(([label, level, open]) => `
            <li class="flex h-[22px] items-center ${indent[level]}">
                <span class="w-[13px] shrink-0">${open ? '<svg class="-mt-[3px] size-2"><use href="#tri" /></svg>' : ""}</span>
                <a href="#" class="flex h-[22px] flex-1 items-center pl-[2px] ${label === "Display" ? "mr-px border border-[#c8c8c8] bg-[#b0b0b0]" : "border border-transparent"}">${label}</a>
            </li>`).join("");

        // tabular pane
        const inv = [
            [190.7, 186.1, 181.5, 176.9, 172.2, 172.2, 172.2, 172.2, 472.2, 522.2, 522.2, 443.5, 364.8, 286.1, 207.4, 128.7, 50, 50, 50, 50, 350, 550, 550, 480.1, 410.3, 340.4, 270.6, 200.7, 130.9],
            [150, 150, 450, 550, 550, 479.6, 409.3, 338.9, 268.5, 198.1, 127.8, 114.8, 101.8, 88.9, 75.9, 63, 50, 50, 50, 50, 50, 150, 450, 419.9, 389.7, 359.6, 329.4, 299.3, 269.1],
            [442.6, 388.9, 335.2, 281.5, 227.8, 198.1, 168.5, 138.9, 109.3, 79.6, 50, 50, 50, 50, 400, 550, 550, 466.7, 383.3, 300, 216.7, 133.3, 50, 50, 50, 50, 350, 550, 550],
            [216.7, 175, 133.3, 91.7, 50, 50, 50, 50, 50, 341.7, 550, 541.7, 533.3, 525, 516.7, 508.3, 500, 483.3, 466.7, 450, 433.3, 416.7, 400, 400, 400, 400, 400, 400, 400],
            Array(29).fill(250),
            Array(29).fill(300)
        ];
        // feeds by tank T101..T107, for a span of days
        const feeds = [
            { to: 6, v: [, , , , 4.6, , 53.7] },
            { to: 12, v: [, , 16.7, 83.3] },
            { to: 18, v: [, , , , 78.7, 13] },
            { to: 24, v: [8.3, 8.3, , 83.3] },
            { to: 30, v: [, , , , 69.9, 30.1] }
        ];
        const heads = [
            ["T105 (HighS Crude) Inventory (End)<br>min: 0<br>max: 800", "kbbl"],
            ["T106 (HighS Crude) Inventory (End)<br>min: 0<br>max: 420", "kbbl"],
            ["T107 (HighS Crude) Inventory (End)<br>min: 0<br>max: 420", "kbbl"],
            ["T108 (HighS Crude) Inventory (End)<br>min: 0<br>max: 450", "kbbl"],
            ["T109A (Anode Crude) Inventory (Start)<br>min: 0<br>max: 400", "kbbl"],
            ["T109B (Anode Crude) Inventory (Start)<br>min: 0<br>max: 400", "kbbl"],
            ["CDU1: CDU1 Feed Flow", "kbbl/d"],
            ["T101 (LowS Crude) → CDU1: CDU1 Feed", "kbbl"],
            ["T102 (LowS Crude) → CDU1: CDU1 Feed", "kbbl"],
            ["T103 (LowS Crude) → CDU1: CDU1 Feed", "kbbl"],
            ["T104 (LowS Crude) → CDU1: CDU1 Feed", "kbbl"],
            ["T105 (HighS Crude) → CDU1: CDU1 Feed", "kbbl"],
            ["T106 (HighS Crude) → CDU1: CDU1 Feed", "kbbl"],
            ["T107 (HighS Crude) → CDU1: CDU1 Feed", "kbbl"],
            ["T109A (Anode Crude) → CDU1: CDU1 Feed", ""]
        ];
        document.getElementById("cols").innerHTML = '<col class="w-[12px]"><col class="w-[97px]">' +
            heads.map((h, i) => `<col class="${i === 6 ? "w-10" : "w-16"}">`).join("");
        document.getElementById("head").innerHTML = `
            <tr class="h-[14px]">
                <td class="border-r border-[#ddd]"></td>
                <td class="border-r border-b border-[#aaa] border-b-[#ddd] bg-linear-to-b from-[#ebebeb] to-[#c9c9c9]"></td>
                ${heads.map((h, i) => `<td class="border-r border-b border-[#aaa] border-b-[#ddd] ${i === 3 ? "bg-[#a9c5e0]" : "bg-linear-to-b from-[#ebebeb] to-[#c9c9c9]"}"></td>`).join("")}
            </tr>
            <tr class="h-[85px]">
                <td class="border-b border-[#bbb] bg-linear-to-r from-[#cfcfcf] to-[#ebebeb]"></td>
                <th rowspan="2" class="border-r border-b border-[#aaa] font-normal">Start</th>
                ${heads.map(h => `<th class="border-r border-b border-[#aaa] px-[4px] py-0 font-normal">${h[0]}</th>`).join("")}
            </tr>
            <tr class="h-4">
                <td class="border-b border-[#bbb] bg-linear-to-r from-[#cfcfcf] to-[#ebebeb]"></td>
                ${heads.map(h => `<th class="h-4 border-r border-b border-[#aaa] p-0 font-normal">${h[1]}</th>`).join("")}
            </tr>`;

        const bar = (v, selected) => `
            <td class="border-r border-b border-[#b4b4b4] p-0 ${selected ? "outline-1 outline-black" : ""}">
                <div class="relative h-[15px] pr-[5px] text-right leading-[15px] text-[#24446e]">
                    <div class="absolute top-px left-[2px] h-3 border border-[#7f8ea3] bg-[#b6cae3]" style="width:${Math.round(v / 10) + 1}px"></div>
                    <span class="relative">${v.toFixed(1)}</span>
                </div>
            </td>`;
        const feed = v => v === undefined
            ? '<td class="border-r border-b border-[#b4b4b4] bg-white p-0"></td>'
            : `<td class="border-r border-b border-[#b4b4b4] p-0">
                <div class="flex h-[15px] items-center justify-between pr-[3px] pl-px leading-[15px]">
                    <span class="flex size-[14px] items-center justify-center rounded-full border border-[#333] bg-[#fc9b78] text-[8px] leading-none text-[#6b2a14]">B</span>${v.toFixed(1)}
                </div>
            </td>`;
        let rows = "";
        for (let i = 0; i < 29; i++) {
            const day = i + 2;
            const f = feeds.find(f => day <= f.to).v;
            rows += `<tr class="h-4">
                <td class="border-b border-[#bbb] p-0 ${day === 19 ? "bg-linear-to-r from-[#a9c5e0] to-[#c5d6ea]" : "bg-linear-to-r from-[#cfcfcf] to-[#ebebeb]"}"></td>
                <td class="border-r border-b border-[#999] p-0 pl-[3px]">2016-04-${String(day).padStart(2, "0")}, 00:00</td>
                ${inv.map((c, n) => bar(c[i], n === 3 && day === 19)).join("")}
                <td class="border-r border-b border-[#b4b4b4] p-0 pr-[3px] text-right">100.0</td>
                ${[0, 1, 2, 3, 4, 5, 6, 7].map(n => feed(f[n])).join("")}
            </tr>`;
        }
        document.getElementById("rows").innerHTML = rows;

        // overview chart
        const line = (x1, y1, x2, y2, c) => `<path d="M${x1} ${y1}L${x2} ${y2}" stroke="${c}" />`;
        const label = (x, y, t, anchor) => `<text x="${x}" y="${y}" text-anchor="${anchor}" fill="#222">${t}</text>`;
        let s = '<path d="M37.500 5.500h361v241h-361z" fill="#f6f6f6" stroke="#d8d8d8" />';
        for (let i = 0; i <= 6; i++) {
            const y = Math.round(246 - i * 38.33) + .5;
            s += line(38, y, 398, y, "#dcdcdc") + line(32, y, 38, y, "#555") + label(26, y + 4, i * 100, "end");
            for (let k = 1; k < 6 && i < 6; k++) s += line(35, Math.round(y - k * 6.4) + .5, 38, Math.round(y - k * 6.4) + .5, "#555");
        }
        ["Apr", 5, 8, 11, 14, 17, 20, 23, 26, 29].forEach((t, i) => {
            const x = Math.round(48 + i * 36.100) + .5;
            s += line(x, 6, x, 246, "#dcdcdc") + line(x, 247, x, 252, "#555") + label(x, 267, t, "middle");
            s += line(x + 12, 247, x + 12, 249, "#555") + line(x + 24, 247, x + 24, 249, "#555");
        });
        s += line(37.500, 5, 37.500, 247, "#555") + line(32, 246.500, 398, 246.500, "#555");
        s += line(253.500, 6, 253.500, 246, "#888") + line(265.500, 6, 265.500, 246, "#888");
        s += '<path d="M38 133 109 227.500H160L177 36.500H183L254 55.500 326 93.500H398" fill="none" stroke="#94b5e8" stroke-width="2" />';
        s += line(38, 16.500, 398, 16.500, "#f00") + line(38, 36.500, 398, 36.500, "#ffa500");
        s += '<path d="M38 227.500H398" stroke="#ffa500" stroke-dasharray="5 1 1 1" />';
        document.getElementById("overview").innerHTML = `<svg class="block w-full text-[11px]" viewBox="0 0 403 276">${s}</svg>`;

        // receipt charts
        const charts = [
            ["T101 (LowS Crude) Inventory", "31,22 63,140 72,21 96,21 129,129 161,140 170,140 177,21 195,21"],
            ["T102 (LowS Crude) Inventory", "31,80 35,21 129,21 161,34 194,111"],
            ["T103 (LowS Crude) Inventory", "31,58 96,105 128,140 138,21 162,21 195,86"],
            ["T104 (LowS Crude) Inventory", "31,104 36,104 41,21 64,21 96,140 105,21 129,21 162,140 170,21 195,21"],
            ["T105 (HighS Crude) Inventory", "31,105 63,111 80,111 86,28 97,28 129,140 146,140 155,21 162,21 195,121"],
            ["T106 (HighS Crude) Inventory", "31,116 47,116 54,21 64,21 96,122 128,140 155,140 162,46 194,88"]
        ];
        document.getElementById("charts").innerHTML = charts.map(([title, pts]) => {
            let c = '<path d="M31 2h164v150H31z" fill="#f6f6f6" />';
            for (let v = 0; v <= 600; v += 200) {
                const y = Math.round(152 - v * .2385) + .5;
                c += line(26, y, 31, y, "#555") + label(19, y + 3, v, "end");
                for (let k = 1; k < 6 && v < 600; k++) c += line(28, Math.round(y - k * 8) + .5, 31, Math.round(y - k * 8) + .5, "#555");
            }
            [["Apr", 46.500], [11, 85.500], [18, 123.500], [25, 161.500]].forEach(([t, x]) => {
                c += line(x, 153, x, 158, "#555") + label(x, 171, t, "middle");
                c += line(x + 13, 153, x + 13, 155, "#555") + line(x + 26, 153, x + 26, 155, "#555");
            });
            c += line(36.500, 153, 36.500, 155, "#555") + line(41.500, 153, 41.500, 155, "#555");
            c += line(30.500, 2, 30.500, 153, "#555") + line(26, 152.500, 195, 152.500, "#555");
            c += line(128.500, 2, 128.500, 152, "#888") + line(134.500, 2, 134.500, 152, "#888");
            c += `<polyline points="${pts}" fill="none" stroke="#94b5e8" stroke-width="2" />`;
            c += line(31, 9.500, 195, 9.500, "#f00") + line(31, 21.500, 195, 21.500, "#ffa500");
            c += '<path d="M31 140.500H195" stroke="#ffa500" stroke-dasharray="5 1 1 1" />';
            return `<figure class="w-[198px] shrink-0">
                <figcaption class="mb-[4px] text-center text-[#222]">${title}</figcaption>
                <div class="border border-black"><svg class="block text-[9px]" width="196" height="176" viewBox="1 1 196 176">${c}</svg></div>
            </figure>`;
        }).join("");
    </script>
</body>

</html>
